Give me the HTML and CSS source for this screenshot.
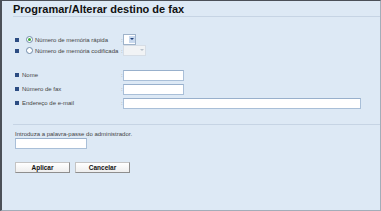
FILE: index.html
```html
<!DOCTYPE html>
<html lang="pt">
<head>
  <meta charset="UTF-8" />
  <title>Programar/Alterar destino de fax</title>
  <link rel="stylesheet" href="styles.css">
</head>
<body>
  <div class="frame">
    <div class="title">Programar/Alterar destino de fax</div>

    <div class="section top">
      <div class="row small">
        <span class="bullet"></span>
        <span class="radio checked"></span>
        <span class="label with-radio">Número de memória rápida</span>
        <span class="colon">:</span>
        <span class="select"><span class="arrow"></span></span>
      </div>
      <div class="row small">
        <span class="bullet"></span>
        <span class="radio"></span>
        <span class="label with-radio">Número de memória codificada</span>
        <span class="colon">:</span>
        <span class="select disabled"><span class="arrow"></span></span>
      </div>
    </div>

    <div class="section fields">
      <div class="row">
        <span class="bullet"></span>
        <span class="label">Nome</span>
        <span class="colon">:</span>
        <input type="text" class="field short" />
      </div>
      <div class="row">
        <span class="bullet"></span>
        <span class="label">Número de fax</span>
        <span class="colon">:</span>
        <input type="text" class="field short" />
      </div>
      <div class="row">
        <span class="bullet"></span>
        <span class="label">Endereço de e-mail</span>
        <span class="colon">:</span>
        <input type="text" class="field long" />
      </div>
    </div>

    <div class="admin">
      <div class="hint">Introduza a palavra-passe do administrador.</div>
      <input type="password" class="field pass" />
      <div class="buttons">
        <button type="button">Aplicar</button>
        <button type="button">Cancelar</button>
      </div>
    </div>
  </div>
</body>
</html>
```

FILE: styles.css
```css
html, body {
  margin: 0;
  padding: 0;
}
body {
  font-family: "Liberation Sans", Arial, sans-serif;
  background: #dde9f5;
}
.frame {
  box-sizing: border-box;
  width: 381px;
  height: 211px;
  background: #dde9f5;
  border-top: 1px solid #4b5058;
  border-left: 2px solid #4b5058;
  border-right: 1px solid #a3adb9;
  border-bottom: 1px solid #a3adb9;
  overflow: hidden;
}
.title {
  margin-left: 11px;
  padding-top: 2px;
  height: 12px;
  line-height: 12px;
  font-size: 11px;
  font-weight: bold;
  color: #111;
  border-bottom: 1px solid #c6d4e4;
  padding-bottom: 1px;
}
.section.top {
  margin-top: 17px;
}
.row {
  display: flex;
  align-items: center;
  height: 14px;
  padding-left: 13px;
  font-size: 6px;
  color: #444;
}
.row.small {
  height: 11px;
}
.bullet {
  width: 4px;
  height: 4px;
  background: #2c4c82;
  flex: none;
}
.radio {
  box-sizing: border-box;
  width: 7px;
  height: 7px;
  border: 1px solid #6f8aa8;
  border-radius: 50%;
  background: #fff;
  margin-left: 7px;
  flex: none;
  display: flex;
  align-items: center;
  justify-content: center;
}
.radio.checked::after {
  content: "";
  width: 3px;
  height: 3px;
  border-radius: 50%;
  background: #3aa83a;
}
.label {
  width: 99px;
  margin-left: 3px;
  white-space: nowrap;
  flex: none;
}
.label.with-radio {
  width: 86px;
  margin-left: 2px;
}
.colon {
  width: 2px;
  flex: none;
  color: #888;
}
.select {
  box-sizing: border-box;
  width: 13px;
  height: 11px;
  background: #fff;
  border: 1px solid #9fb3ca;
  display: flex;
  justify-content: flex-end;
  align-items: center;
}
.select .arrow {
  width: 6px;
  height: 7px;
  background: #c9d9ee;
  position: relative;
}
.select .arrow::after {
  content: "";
  position: absolute;
  left: 1px;
  top: 2px;
  border-left: 2px solid transparent;
  border-right: 2px solid transparent;
  border-top: 2px solid #1c3e78;
}
.select.disabled {
  width: 23px;
  background: #f1f3f5;
  border-color: #d6dde5;
}
.select.disabled .arrow {
  background: transparent;
}
.select.disabled .arrow::after {
  border-top-color: #b8c2cc;
}
.section.fields {
  margin-top: 12px;
}
.field {
  box-sizing: border-box;
  height: 11px;
  padding: 0;
  margin: 0;
  border: 1px solid #a9bfd8;
  border-top-color: #98b0cc;
  background: #fff;
}
.field.short {
  width: 61px;
}
.field.long {
  width: 238px;
}
.admin {
  margin-top: 14px;
  margin-left: 11px;
  border-top: 1px solid #c6d4e4;
  padding-left: 2px;
}
.hint {
  margin-top: 6px;
  font-size: 6px;
  color: #444;
  line-height: 7px;
}
.field.pass {
  display: block;
  width: 72px;
  margin-top: 0;
}
.buttons {
  display: flex;
  gap: 5px;
  margin-top: 13px;
}
button {
  box-sizing: border-box;
  width: 55px;
  height: 11px;
  padding: 0;
  font-family: "Liberation Sans", Arial, sans-serif;
  font-size: 6.5px;
  font-weight: bold;
  color: #111;
  background: linear-gradient(#ffffff, #eeeeee);
  border: 1px solid #c4c4c4;
  border-right-color: #8e8e8e;
  border-bottom-color: #8e8e8e;
  line-height: 9px;
}
```
